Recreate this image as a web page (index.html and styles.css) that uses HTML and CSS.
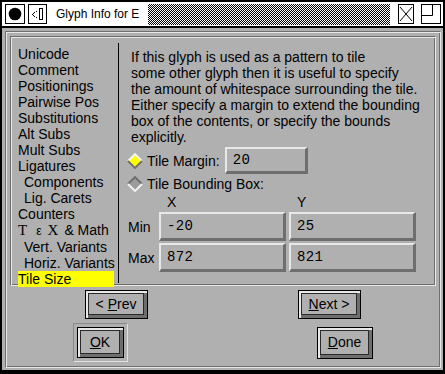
FILE: index.html
```html
<!DOCTYPE html>
<html lang="en">
<head>
    <meta charset="UTF-8">
    <title>Glyph Info for E</title>
    <link rel="stylesheet" href="styles.css">
</head>
<body>
    <div class="window">
        <div class="titlebar">
            <span class="tb-box">
                <svg width="20" height="20" viewBox="0 0 20 20"><rect x="0.5" y="0.5" width="19" height="19" fill="#fff" stroke="#000"/><circle cx="10" cy="10" r="6.3" fill="#000"/></svg>
            </span>
            <span class="tb-box tb-iconify">
                <svg width="19" height="20" viewBox="0 0 19 20"><rect x="0.5" y="0.5" width="18" height="19" fill="#fff" stroke="#000"/><rect x="8" y="7" width="1" height="1"/><rect x="6" y="8" width="1" height="1"/><rect x="5" y="9" width="1" height="1"/><rect x="4" y="10" width="1" height="1"/><rect x="5" y="11" width="1" height="1"/><rect x="6" y="12" width="1" height="1"/><rect x="8" y="13" width="1" height="1"/><rect x="11.5" y="4.5" width="3" height="11" fill="none" stroke="#000"/></svg>
            </span>
            <span class="tb-title">Glyph Info for E</span>
            <span class="tb-stipple"></span>
            <span class="tb-close">
                <svg width="16" height="20" viewBox="0 0 16 20"><rect x="0.5" y="0.5" width="15" height="19" fill="#fff" stroke="#000"/><path d="M2 3 L14 17 M14 3 L2 17" stroke="#000" fill="none"/></svg>
            </span>
            <span class="tb-max">
                <svg width="20" height="20" viewBox="0 0 20 20"><rect x="0.5" y="0.5" width="19" height="19" fill="#fff" stroke="#000"/><path d="M0.5 11.5 H11.5 V0.5" stroke="#000" fill="none"/></svg>
            </span>
        </div>

        <div class="client">
            <div class="outer-frame">
                <div class="main-frame">
                    <ul class="tabs">
                        <li>Unicode</li>
                        <li>Comment</li>
                        <li>Positionings</li>
                        <li>Pairwise Pos</li>
                        <li>Substitutions</li>
                        <li>Alt Subs</li>
                        <li>Mult Subs</li>
                        <li>Ligatures</li>
                        <li class="sub">Components</li>
                        <li class="sub">Lig. Carets</li>
                        <li>Counters</li>
                        <li><span class="tex tex-t">T</span><span class="tex-e">ε</span><span class="tex tex-x">X</span>&amp; Math</li>
                        <li class="sub">Vert. Variants</li>
                        <li class="sub">Horiz. Variants</li>
                        <li class="selected">Tile Size</li>
                    </ul>

                    <div class="pane">
                        <p class="help">If this glyph is used as a pattern to tile<br>some other glyph then it is useful to specify<br>the amount of whitespace surrounding the tile.<br>Either specify a margin to extend the bounding<br>box of the contents, or specify the bounds<br>explicitly.</p>

                        <div class="opt-row">
                            <svg class="radio" width="16" height="16" viewBox="0 0 16 16"><polygon points="8,1 15,8 8,15 1,8" fill="#ffff00"/><polyline points="1,8 8,1 15,8" fill="none" stroke="#f4f4f4" stroke-width="1.8"/><polyline points="1,8 8,15 15,8" fill="none" stroke="#6e6e6e" stroke-width="1.8"/></svg>
                            <span class="opt-label">Tile Margin:</span>
                            <div class="field field-margin">20</div>
                        </div>

                        <div class="opt-row opt-bbox">
                            <svg class="radio" width="16" height="16" viewBox="0 0 16 16"><polygon points="8,1 15,8 8,15 1,8" fill="#9c9c9c"/><polyline points="1,8 8,1 15,8" fill="none" stroke="#6e6e6e" stroke-width="1.8"/><polyline points="1,8 8,15 15,8" fill="none" stroke="#f4f4f4" stroke-width="1.8"/></svg>
                            <span class="opt-label">Tile Bounding Box:</span>
                        </div>

                        <div class="bounds">
                            <span></span>
                            <span class="axis">X</span>
                            <span class="axis">Y</span>

                            <span class="bound-label">Min</span>
                            <div class="field">-20</div>
                            <div class="field">25</div>

                            <span class="bound-label">Max</span>
                            <div class="field">872</div>
                            <div class="field">821</div>
                        </div>
                    </div>
                </div>

                <div class="btn-row btn-row-nav">
                    <button class="btn btn-nav"><span class="face"><span>&lt; <u>P</u>rev</span></span></button>
                    <button class="btn btn-nav"><span class="face"><span><u>N</u>ext &gt;</span></span></button>
                </div>

                <div class="btn-row btn-row-main">
                    <div class="default-ring">
                        <button class="btn btn-ok"><span class="face"><span><u>O</u>K</span></span></button>
                    </div>
                    <button class="btn btn-done"><span class="face"><span><u>D</u>one</span></span></button>
                </div>
            </div>
        </div>
    </div>
</body>
</html>
```

FILE: styles.css
```css
:root {
    --face: #b0b0b0;
    --light: #e8e8e8;
    --dark: #6e6e6e;
    --ui-font: "Liberation Sans", Arial, sans-serif;
}

* {
    box-sizing: border-box;
}

body {
    margin: 0;
    background: #000;
    font-family: var(--ui-font);
    font-size: 14px;
    color: #000;
}

.window {
    width: 445px;
    height: 374px;
    border: 2px solid #000;
    border-bottom-width: 4px;
    background: #000;
}

/* title bar */
.titlebar {
    display: flex;
    align-items: center;
    height: 24px;
    padding: 0 2px 0 3px;
    background: #fff;
}

.tb-box,
.tb-close,
.tb-max {
    display: flex;
}

.tb-box svg,
.tb-close svg,
.tb-max svg {
    display: block;
}

.tb-iconify {
    margin-left: 3px;
}

.tb-title {
    margin-left: 9px;
    font-size: 12px;
    white-space: nowrap;
}

.tb-stipple {
    flex: 1;
    height: 21px;
    margin: 0 8px 0 9px;
    background: repeating-conic-gradient(#000 0 25%, #fff 0 50%) 0 0 / 2px 2px;
}

.tb-max {
    margin-left: 7px;
}

.client {
    height: 344px;
    border-top: 2px solid #000;
    padding: 3px 2px 2px 3px;
    background: var(--face);
}

/* etched group frames */
.outer-frame,
.main-frame {
    border: 1px solid;
    border-color: var(--dark) var(--light) var(--light) var(--dark);
    box-shadow: inset 1px 1px 0 var(--light), inset -1px -1px 0 var(--dark);
}

.outer-frame {
    height: 337px;
    padding: 4px;
}

.main-frame {
    display: flex;
    height: 250px;
}

/* tab list */
.tabs {
    list-style: none;
    width: 107px;
    margin: 0;
    padding: 9px 4px 0 7px;
    line-height: 16px;
    white-space: nowrap;
}

.tabs .sub {
    padding-left: 6px;
}

.tabs .selected {
    background: #ffff00;
}

.tex {
    font-family: "Liberation Serif", "Times New Roman", serif;
    font-size: 15px;
}

.tex-t {
    margin-right: 9px;
}

.tex-e {
    margin-right: 6px;
    font-size: 12px;
}

.tex-x {
    margin-right: 6px;
}

/* right pane */
.pane {
    flex: 1;
    margin: 6px 0 2px 0;
    padding: 6px 0 0 9px;
    border-left: 1px solid #000;
}

.help {
    margin: 0 0 0 3px;
    line-height: 16px;
}

.opt-row {
    display: flex;
    align-items: center;
    height: 27px;
    margin-top: 2px;
}

.opt-row .radio {
    flex: none;
    margin-left: -1px;
}

.opt-label {
    margin-left: 4px;
    line-height: 16px;
    white-space: nowrap;
}

.opt-bbox {
    align-items: flex-start;
    height: 14px;
}

.field {
    display: flex;
    align-items: center;
    height: 29px;
    padding-left: 6px;
    border-style: solid;
    border-width: 2px 3px 3px 2px;
    border-color: var(--light) var(--dark) var(--dark) var(--light);
    font-family: "Liberation Mono", "Courier New", monospace;
    font-size: 14px;
    letter-spacing: 0.4px;
}

.field-margin {
    width: 83px;
    height: 27px;
    margin-left: 5px;
}

.bounds {
    display: grid;
    grid-template-columns: 28px 127px 127px;
    grid-template-rows: 16px 29px 29px;
    column-gap: 3px;
    row-gap: 2px;
    margin-top: 4px;
}

.axis {
    padding-left: 8px;
    line-height: 16px;
}

.bound-label {
    align-self: center;
}

/* buttons */
.btn-row {
    display: flex;
    justify-content: center;
    align-items: center;
}

.btn-row-nav {
    gap: 150px;
    margin-top: 4px;
}

.btn-row-main {
    gap: 189px;
    margin-top: 4px;
}

.btn {
    display: block;
    padding: 2px 3px 3px 2px;
    border: 1px solid #000;
    background: var(--face);
    box-shadow: inset 2px 2px 0 var(--light), inset -3px -3px 0 var(--dark);
    font: inherit;
    color: #000;
}

.btn .face {
    display: flex;
    align-items: center;
    justify-content: center;
    height: 100%;
    border: 1px solid #2a2a2a;
    white-space: nowrap;
}

.btn-nav {
    width: 63px;
    height: 29px;
}

.default-ring {
    width: 55px;
    height: 39px;
    padding: 3px;
    border: 1px solid;
    border-color: #8a8a8a #e0e0e0 #e0e0e0 #8a8a8a;
}

.btn-ok {
    width: 47px;
    height: 31px;
}

.btn-done {
    width: 56px;
    height: 32px;
}
```
